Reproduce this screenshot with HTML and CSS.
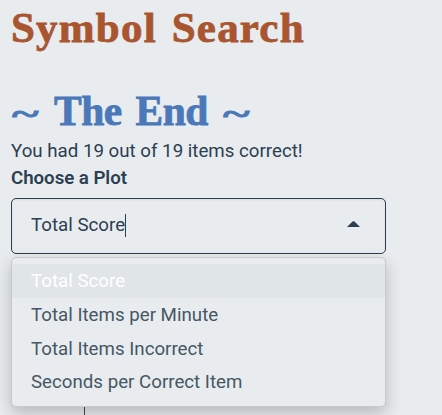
FILE: index.html
```
<!DOCTYPE html>
<html lang="en">
<head>
<meta charset="utf-8">
<title>Symbol Search</title>
<link rel="stylesheet" href="styles.css">
</head>
<body>
<main class="page">
  <h1 class="title">Symbol Search</h1>
  <h1 class="ending"><span class="tilde">~</span> <span class="words">The End</span> <span class="tilde">~</span></h1>
  <p class="result">You had 19 out of 19 items correct!</p>
  <label class="label">Choose a Plot</label>
  <div class="select">
    <div class="control"><span class="value">Total Score</span><span class="caret"></span>
      <svg class="arrow" width="13" height="6" viewBox="0 0 13 6"><path d="M0 6L5.5.6Q6.5-.2 7.5.6L13 6Z" fill="#2c3e50"/></svg>
    </div>
    <div class="menu">
      <div class="option active">Total Score</div>
      <div class="option">Total Items per Minute</div>
      <div class="option">Total Items Incorrect</div>
      <div class="option">Seconds per Correct Item</div>
    </div>
  </div>
  <div class="plot"><div class="axis"></div></div>
</main>
</body>
</html>
```
FILE: styles.css
```
* { box-sizing: border-box; }
body {
  margin: 0;
  height: 415px;
  overflow: hidden;
  background: #e8ecef;
  color: #2c3e50;
  font: 400 18.72px/27px Roboto, "Liberation Sans", sans-serif;
}
.page { padding: 0 11px; }
h1, p { margin: 0; white-space: nowrap; }
h1 {
  font: bold 43px/50px "Liberation Serif", serif;
  -webkit-text-stroke: 0.8px currentColor;
}
.title { padding-top: 3px; color: #a9552f; letter-spacing: 1.2px; word-spacing: 3px; }
.ending { display: flex; align-items: center; margin-top: 33px; color: #4a78b8; }
.words { margin-left: 16px; width: 154px; font-size: 41.5px; letter-spacing: -0.5px; word-spacing: 4px; }
.tilde {
  width: 27px;
  padding-left: 1px;
  -webkit-text-stroke-width: 1.3px;
  transform: translateY(3px) scale(1.17, 0.7);
  transform-origin: 0 50%;
}
.words + .tilde { margin-left: 14px; }
.result { margin-top: 2px; }
.label { display: block; font-weight: 640; height: 33px; letter-spacing: -0.05px; }
.select { position: relative; width: 375px; }
.control {
  display: flex;
  align-items: center;
  height: 56px;
  padding: 0 25px 1px 19px;
  border: 1px solid #2c3e50;
  border-radius: 5px;
  box-shadow: inset 0 1px 2px rgba(0, 0, 0, 0.08);
}
.caret { width: 1px; height: 23px; margin-bottom: 1px; background: #2c3e50; }
.arrow { margin: 0 0 3px auto; }
.menu {
  position: absolute;
  top: 59px;
  left: 0;
  width: 375px;
  height: 150px;
  padding: 6.25px 0 0;
  border: 1px solid #c6cacd;
  border-radius: 5px;
  background: #e8ecef;
  box-shadow: 0 6px 16px rgba(0, 0, 0, 0.22);
}
.option { height: 33.67px; padding-left: 19px; line-height: 35.67px; color: #465764; }
.option.active { background: #e0e5e7; color: #fff; }
.plot { padding: 150px 0 0 73px; }
.axis { width: 1px; height: 12px; background: #444; }
```
